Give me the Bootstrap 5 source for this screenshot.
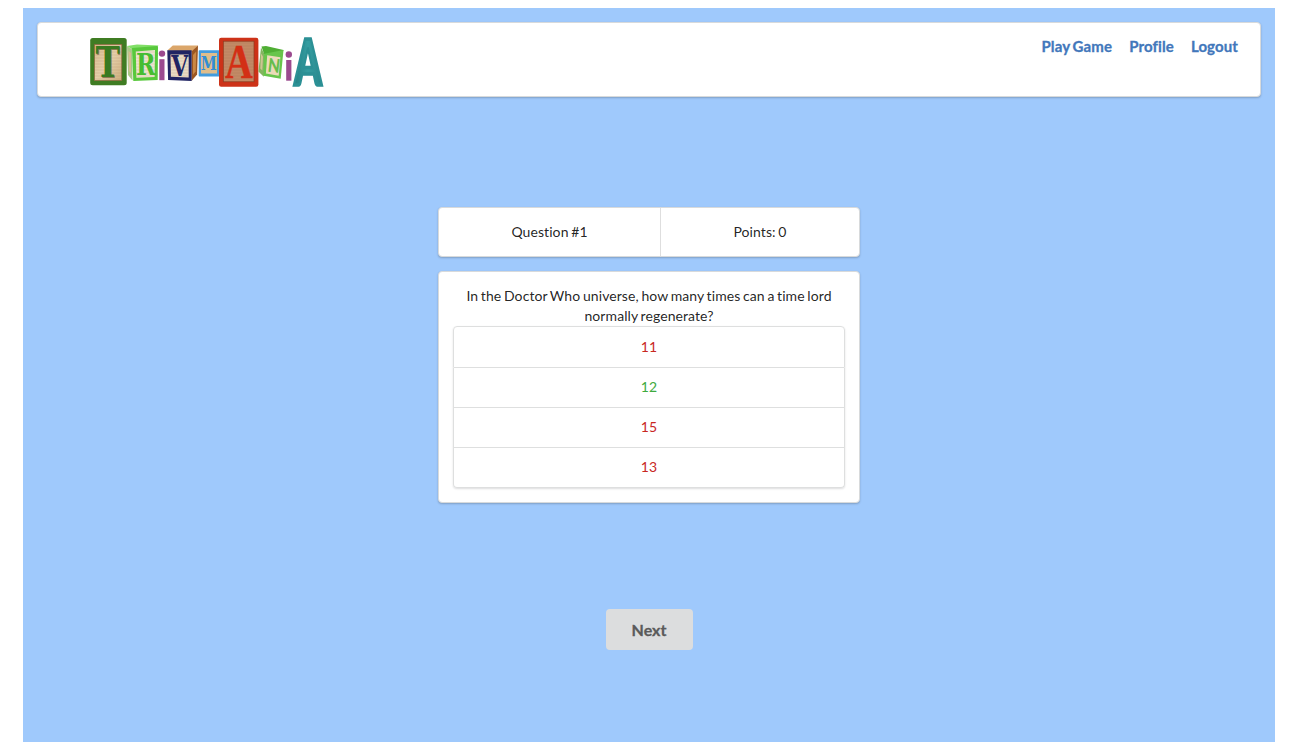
<!DOCTYPE html>
<html lang="en">
<head>
<meta charset="utf-8">
<meta name="viewport" content="width=device-width, initial-scale=1">
<title>Trivmania</title>
<link href="https://cdn.jsdelivr.net/npm/bootstrap@5.3.0/dist/css/bootstrap.min.css" rel="stylesheet">
<style>
body{font-family:Lato,sans-serif;font-size:14px;line-height:20px;letter-spacing:.08px;word-spacing:-1px;color:rgba(0,0,0,.87);background:#fff;height:754px;overflow:hidden}
.page{margin:8px 19px 12px 23px;height:734px;background:#9fc9fc;padding:14px}
.panel{background:#fff;border:1px solid #d8dadb;border-radius:4px;box-shadow:0 1px 2px rgba(34,36,38,.25)}
.topbar{height:75px;padding:0 22px 0 50px}
.logo svg{overflow:visible;letter-spacing:0;word-spacing:0}
.menu{margin-top:13px;gap:17px;font-size:15px;font-weight:700;letter-spacing:.12px;-webkit-text-stroke:.3px #4277bb}
.menu a{color:#4277bb;padding:0;line-height:20px}
.quiz{width:422px;margin-top:110px}
.score{height:50px;margin-bottom:14px}
.score-q{width:222px;border-right:1px solid #dedede}
.question{height:232px;padding:14px}
.answers{height:162px;--bs-list-group-border-color:#dedfdf;--bs-list-group-border-radius:4px;box-shadow:0 1px 2px rgba(34,36,38,.15)}
.answers .list-group-item{padding:9px 0;line-height:20px;height:40px}
.answers .list-group-item:first-child{height:42px;padding:10px 0}
.wrong{color:#c8281f}
.right{color:#3eaa3e}
.next{--bs-btn-bg:#dcddde;--bs-btn-color:#5a5a5a;--bs-btn-border-width:0;width:87px;height:41px;margin-top:106px;font-size:16px;font-weight:700;border-radius:4px;padding:0;letter-spacing:0;-webkit-text-stroke:.3px #5a5a5a}
</style>
</head>
<body>
<div class="page">
  <nav class="panel topbar d-flex justify-content-between align-items-start">
    <a class="logo d-block" href="#" aria-label="Trivmania">
      <svg class="d-block" width="240" height="73" viewBox="88 23 240 73" font-family="DejaVu Serif, serif" font-weight="700">
        <defs>
          <linearGradient id="wood" x2="1" y2="1"><stop stop-color="#d9bd8f"/><stop offset=".5" stop-color="#e5cfaa"/><stop offset="1" stop-color="#cfb07e"/></linearGradient>
          <linearGradient id="teal" x2="1"><stop stop-color="#247f83"/><stop offset=".5" stop-color="#349da1"/><stop offset="1" stop-color="#28868b"/></linearGradient>
          <pattern id="grain" width="40" height="3" patternUnits="userSpaceOnUse"><path d="M0 1H40" stroke="#8a5a30" stroke-opacity=".2" stroke-width=".7"/></pattern>
        </defs>
        <rect x="90.2" y="38" width="36.5" height="47.2" rx="2.5" fill="#3f7c23"/>
        <rect x="94.4" y="44.4" width="27.4" height="36.2" fill="url(#wood)" stroke="#89633a" stroke-width=".7"/>
        <rect x="94.4" y="44.4" width="27.4" height="36.2" fill="url(#grain)"/>
        <text x="96.5" y="77.6" font-size="42" textLength="24" lengthAdjust="spacingAndGlyphs" fill="#5d4a28" opacity=".6">T</text>
        <text x="95.5" y="77" font-size="42" textLength="24.4" lengthAdjust="spacingAndGlyphs" fill="#397a20">T</text>

        <path d="M127 46l5.5 3.5v31L128 75z" fill="#a8c987"/>
        <path d="M128.5 51l2.5 2v20l-2-2z" fill="#d8bb91"/>
        <path d="M127 46l10-1.4 21.5 1-3.5 3.9h-22.5z" fill="#82df68"/>
        <path d="M132 48l25-2 1 .5-.3 33.5-24.4 1z" fill="#58c83c"/>
        <path d="M135.8 51.5l19.2-1.5-.4 27-18.2.8z" fill="#eee5cf"/>
        <path d="M135.8 51.5l19.2-1.5-.4 27-18.2.8z" fill="url(#grain)"/>
        <text x="136" y="75" font-size="29.5" textLength="19.5" lengthAdjust="spacingAndGlyphs" fill="#46bd31">R</text>

        <circle cx="162" cy="53.6" r="3.2" fill="#9b4a8f"/><rect x="159.3" y="59.2" width="5.2" height="21" fill="#9b4a8f"/>

        <path d="M167.3 50.5l5.5-5H198l-6 6.2z" fill="#dba66a"/>
        <path d="M191.5 51.5l6.5-6.1-.9 29-5.6 6.6z" fill="#9c5722"/>
        <path d="M193 55l3.2-3.5-.5 20-2.7 3.2z" fill="#c98745"/>
        <path d="M167.3 50.2h24.3V81l-23.5-1z" fill="#202463"/>
        <path d="M170.5 54.5h18.2v23l-17.8-.7z" fill="#e9dcc4"/>
        <path d="M170.5 54.5h18.2v23l-17.8-.7z" fill="url(#grain)"/>
        <text x="171.3" y="76.2" font-size="28" textLength="17" lengthAdjust="spacingAndGlyphs" fill="#202463">V</text>

        <rect x="198.7" y="50.2" width="20.8" height="26.3" rx=".8" fill="#439cde"/>
        <rect x="201" y="53" width="16" height="20.5" fill="#dfbd8b"/>
        <text x="200.7" y="69.7" font-size="18.5" textLength="16" lengthAdjust="spacingAndGlyphs" fill="#318dd4">M</text>

        <rect x="219" y="37.8" width="39.4" height="49" rx="2.2" fill="#cd3218"/>
        <rect x="223.3" y="41.2" width="30.7" height="40.6" fill="#c28a66" stroke="#8c3a20" stroke-width=".7"/>
        <rect x="223.3" y="41.2" width="30.7" height="40.6" fill="url(#grain)"/>
        <text x="225" y="77.5" font-family="Liberation Serif, serif" font-size="48" textLength="27.8" lengthAdjust="spacingAndGlyphs" fill="#d32f15" stroke="#d32f15" stroke-width=".4">A</text>

        <path d="M261 47.5l4.2 8-1.4 21.3-5.4-5.3z" fill="#83b45f"/>
        <path d="M261 53.5l2 3-.7 14-2-2z" fill="#cfc392"/>
        <path d="M261.5 46.5l4.5-.4 17.5 3.9-2 5-17.3-.5z" fill="#4fae34"/>
        <path d="M264.3 53.8l19.2-3.8-2.8 28.8-17.2-3z" fill="#67c54b"/>
        <path d="M267.2 55.3l13.2 1.9-1.7 18.5-12.8-2.3z" fill="#eadbb9"/>
        <text transform="translate(267.2 71.5) rotate(7)" font-family="Lato, sans-serif" font-weight="900" font-size="19" textLength="12" lengthAdjust="spacingAndGlyphs" fill="#66bd4d">N</text>

        <circle cx="288.8" cy="54.5" r="3.2" fill="#9b4a8f"/><rect x="286.2" y="60" width="5.2" height="20.7" fill="#9b4a8f"/>
        <text x="294.3" y="85" font-family="Lato, sans-serif" font-weight="900" font-size="63" textLength="27.4" lengthAdjust="spacingAndGlyphs" fill="url(#teal)" stroke="#2b9095" stroke-width="3.4">A</text>
      </svg>
    </a>
    <div class="menu nav flex-nowrap">
      <a class="nav-link" href="#">Play Game</a>
      <a class="nav-link" href="#">Profile</a>
      <a class="nav-link" href="#">Logout</a>
    </div>
  </nav>
  <main class="quiz mx-auto d-flex flex-column">
    <div class="panel score d-flex text-center">
      <div class="score-q d-flex align-items-center justify-content-center">Question #1</div>
      <div class="flex-fill d-flex align-items-center justify-content-center">Points: 0</div>
    </div>
    <div class="panel question text-center">
      <div>In the Doctor Who universe, how many times can a time lord normally regenerate?</div>
      <div class="list-group answers">
        <div class="list-group-item wrong">11</div>
        <div class="list-group-item right">12</div>
        <div class="list-group-item wrong">15</div>
        <div class="list-group-item wrong">13</div>
      </div>
    </div>
    <button class="btn next align-self-center" type="button">Next</button>
  </main>
</div>
<script src="https://cdn.jsdelivr.net/npm/bootstrap@5.3.0/dist/js/bootstrap.bundle.min.js"></script>
</body>
</html>
